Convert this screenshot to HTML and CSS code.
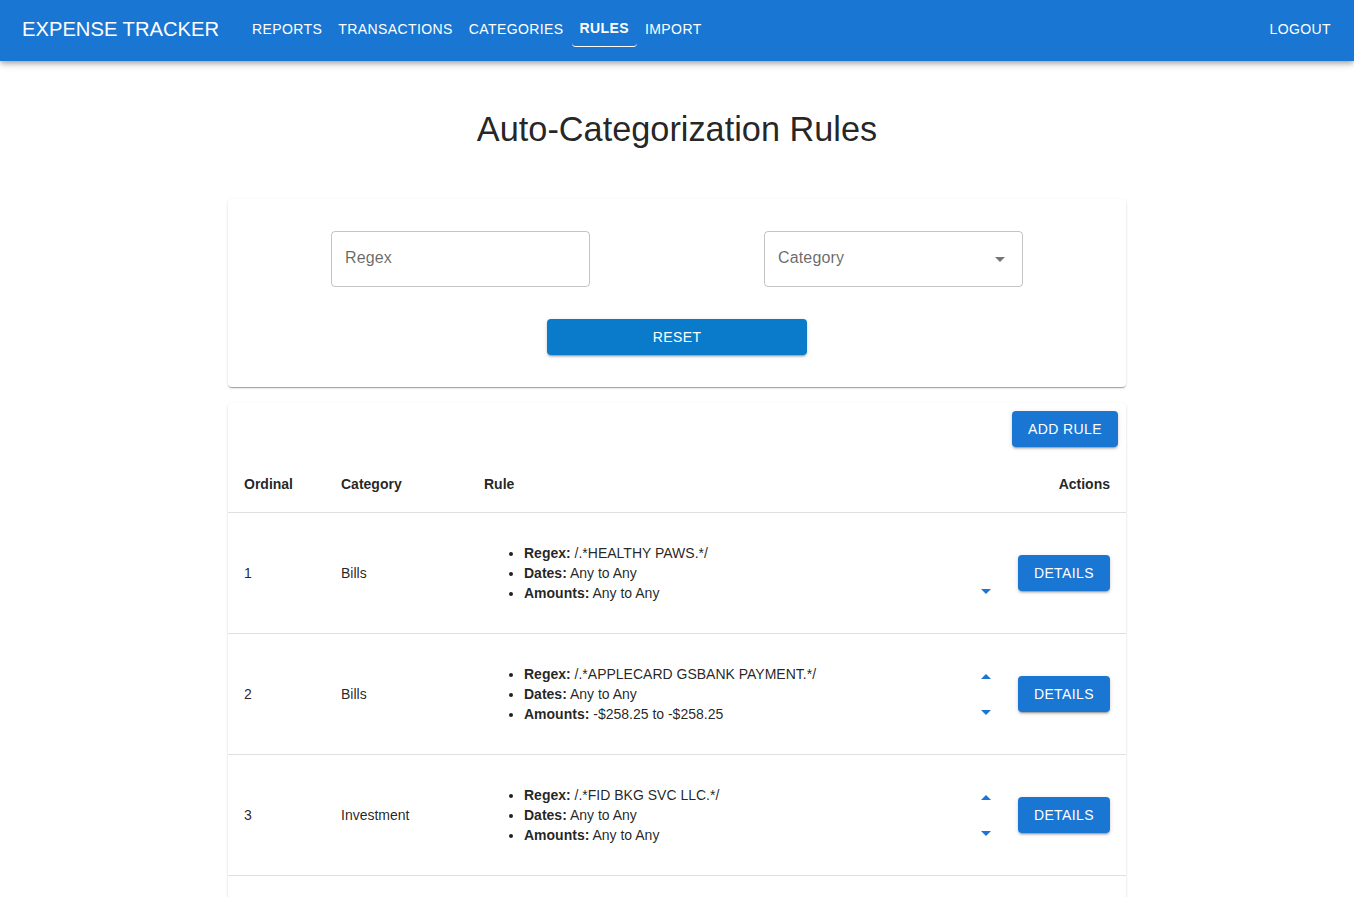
FILE: index.html
```html
<!DOCTYPE html>
<html lang="en">
<head>
<meta charset="utf-8">
<title>Expense Tracker - Rules</title>
<link rel="stylesheet" href="styles.css">
</head>
<body>
<header class="appbar">
  <div class="brand">EXPENSE TRACKER</div>
  <nav class="nav">
    <a class="nav-btn">REPORTS</a>
    <a class="nav-btn">TRANSACTIONS</a>
    <a class="nav-btn">CATEGORIES</a>
    <a class="nav-btn active">RULES</a>
    <a class="nav-btn">IMPORT</a>
  </nav>
  <a class="nav-btn logout">LOGOUT</a>
</header>

<main class="main">
  <h1 class="title">Auto-Categorization Rules</h1>

  <section class="card filters">
    <div class="filter-cell">
      <div class="field"><span class="field-label">Regex</span></div>
    </div>
    <div class="filter-cell">
      <div class="field select"><span class="field-label">Category</span>
        <svg class="select-icon" viewBox="0 0 24 24" width="24" height="24"><path d="M7 10l5 5 5-5z"/></svg>
      </div>
    </div>
    <div class="filter-actions">
      <button class="btn reset">RESET</button>
    </div>
  </section>

  <section class="card rules">
    <div class="rules-toolbar">
      <button class="btn primary">ADD RULE</button>
    </div>
    <table class="table">
      <colgroup>
        <col class="c-ord"><col class="c-cat"><col class="c-rule"><col class="c-act">
      </colgroup>
      <thead>
        <tr>
          <th>Ordinal</th>
          <th>Category</th>
          <th>Rule</th>
          <th class="right">Actions</th>
        </tr>
      </thead>
      <tbody>
        <tr>
          <td>1</td>
          <td>Bills</td>
          <td>
            <ul class="rule-list">
              <li><b>Regex:</b> /.*HEALTHY PAWS.*/</li>
              <li><b>Dates:</b> Any to Any</li>
              <li><b>Amounts:</b> Any to Any</li>
            </ul>
          </td>
          <td>
            <div class="actions">
              <div class="arrows">
                <span class="arrow hidden"><svg viewBox="0 0 24 24" width="24" height="24"><path d="M7 14l5-5 5 5z"/></svg></span>
                <span class="arrow"><svg viewBox="0 0 24 24" width="24" height="24"><path d="M7 10l5 5 5-5z"/></svg></span>
              </div>
              <button class="btn primary">DETAILS</button>
            </div>
          </td>
        </tr>
        <tr>
          <td>2</td>
          <td>Bills</td>
          <td>
            <ul class="rule-list">
              <li><b>Regex:</b> /.*APPLECARD GSBANK PAYMENT.*/</li>
              <li><b>Dates:</b> Any to Any</li>
              <li><b>Amounts:</b> -$258.25 to -$258.25</li>
            </ul>
          </td>
          <td>
            <div class="actions">
              <div class="arrows">
                <span class="arrow"><svg viewBox="0 0 24 24" width="24" height="24"><path d="M7 14l5-5 5 5z"/></svg></span>
                <span class="arrow"><svg viewBox="0 0 24 24" width="24" height="24"><path d="M7 10l5 5 5-5z"/></svg></span>
              </div>
              <button class="btn primary">DETAILS</button>
            </div>
          </td>
        </tr>
        <tr>
          <td>3</td>
          <td>Investment</td>
          <td>
            <ul class="rule-list">
              <li><b>Regex:</b> /.*FID BKG SVC LLC.*/</li>
              <li><b>Dates:</b> Any to Any</li>
              <li><b>Amounts:</b> Any to Any</li>
            </ul>
          </td>
          <td>
            <div class="actions">
              <div class="arrows">
                <span class="arrow"><svg viewBox="0 0 24 24" width="24" height="24"><path d="M7 14l5-5 5 5z"/></svg></span>
                <span class="arrow"><svg viewBox="0 0 24 24" width="24" height="24"><path d="M7 10l5 5 5-5z"/></svg></span>
              </div>
              <button class="btn primary">DETAILS</button>
            </div>
          </td>
        </tr>
      </tbody>
    </table>
    <div class="table-more"></div>
  </section>
</main>
</body>
</html>
```

FILE: styles.css
```css
* { box-sizing: border-box; }

html, body {
  margin: 0;
  padding: 0;
  background: #ffffff;
  font-family: "Liberation Sans", Arial, Helvetica, sans-serif;
  color: rgba(0, 0, 0, 0.87);
}

.appbar {
  position: relative;
  z-index: 2;
  height: 61px;
  background: #1976d2;
  color: #ffffff;
  display: flex;
  align-items: center;
  padding: 0 15px 4px 22px;
  box-shadow: 0 2px 4px -1px rgba(0,0,0,0.2), 0 4px 5px 0 rgba(0,0,0,0.14), 0 1px 10px 0 rgba(0,0,0,0.12);
}

.brand {
  font-size: 20.2px;
  line-height: 32px;
  margin-right: 25px;
}

.nav {
  display: flex;
  align-items: center;
  flex: 1;
}

.nav-btn {
  display: inline-flex;
  align-items: center;
  height: 36px;
  padding: 6px 8px;
  font-size: 14px;
  letter-spacing: 0.4px;
  line-height: 24px;
  color: #ffffff;
  border-radius: 4px;
  cursor: pointer;
}

.nav-btn.active {
  font-weight: 700;
  border-bottom: 1px solid #ffffff;
}

.main {
  width: 898px;
  margin: 0 auto;
}

.title {
  margin: 47px 0 49px;
  font-size: 34.3px;
  line-height: 42px;
  font-weight: 400;
  text-align: center;
  color: rgba(0, 0, 0, 0.87);
}

.card {
  background: #ffffff;
  border-radius: 4px;
  box-shadow: 0 2px 1px -1px rgba(0,0,0,0.2), 0 1px 1px 0 rgba(0,0,0,0.14), 0 1px 3px 0 rgba(0,0,0,0.12);
}

.filters {
  display: grid;
  grid-template-columns: 1fr 1fr;
  row-gap: 32px;
  padding: 32px 16px;
  margin-bottom: 16px;
}

.filter-cell {
  display: flex;
  justify-content: center;
}

.field {
  position: relative;
  width: 259px;
  height: 56px;
  border: 1px solid rgba(0, 0, 0, 0.23);
  border-radius: 4px;
  display: flex;
  align-items: center;
  padding: 0 13px 2px;
}

.field-label {
  font-size: 16px;
  color: rgba(0, 0, 0, 0.6);
  letter-spacing: 0.15px;
}

.select-icon {
  position: absolute;
  right: 10px;
  top: 15px;
  fill: rgba(0, 0, 0, 0.54);
}

.filter-actions {
  grid-column: 1 / span 2;
  display: flex;
  justify-content: center;
}

.btn {
  font-family: "Liberation Sans", Arial, Helvetica, sans-serif;
  font-size: 14px;
  letter-spacing: 0.4px;
  line-height: 24px;
  height: 36px;
  padding: 6px 16px;
  border: none;
  border-radius: 4px;
  color: #ffffff;
  cursor: pointer;
  box-shadow: 0 3px 1px -2px rgba(0,0,0,0.2), 0 2px 2px 0 rgba(0,0,0,0.14), 0 1px 5px 0 rgba(0,0,0,0.12);
}

.btn.reset {
  width: 260px;
  background: #0a7bcb;
}

.btn.primary {
  background: #1976d2;
}

.rules {
  overflow: hidden;
}

.rules-toolbar {
  display: flex;
  justify-content: flex-end;
  padding: 8px 8px 9px;
  height: 53px;
}

.table {
  width: 100%;
  border-collapse: collapse;
  table-layout: fixed;
  font-size: 14px;
}

.c-ord { width: 97px; }
.c-cat { width: 143px; }
.c-act { width: 180px; }

.table th,
.table td {
  padding: 16px;
  text-align: left;
  border-bottom: 1px solid #e0e0e0;
  vertical-align: middle;
}

.table th {
  font-weight: 700;
  line-height: 24px;
  color: rgba(0, 0, 0, 0.87);
}

.table td {
  line-height: 20px;
  color: rgba(0, 0, 0, 0.87);
}

.table th.right { text-align: right; }

.rule-list {
  margin: 14px 0;
  padding-left: 40px;
}

.rule-list b { font-weight: 700; }

.actions {
  display: flex;
  align-items: center;
  justify-content: flex-end;
}

.arrows {
  display: flex;
  flex-direction: column;
  width: 34px;
  margin-right: 15px;
}

.arrow {
  height: 35px;
  display: flex;
  align-items: center;
  justify-content: center;
}

.arrow svg { fill: #1976d2; }

.arrow.hidden { visibility: hidden; }

.table-more {
  height: 120px;
}
```
